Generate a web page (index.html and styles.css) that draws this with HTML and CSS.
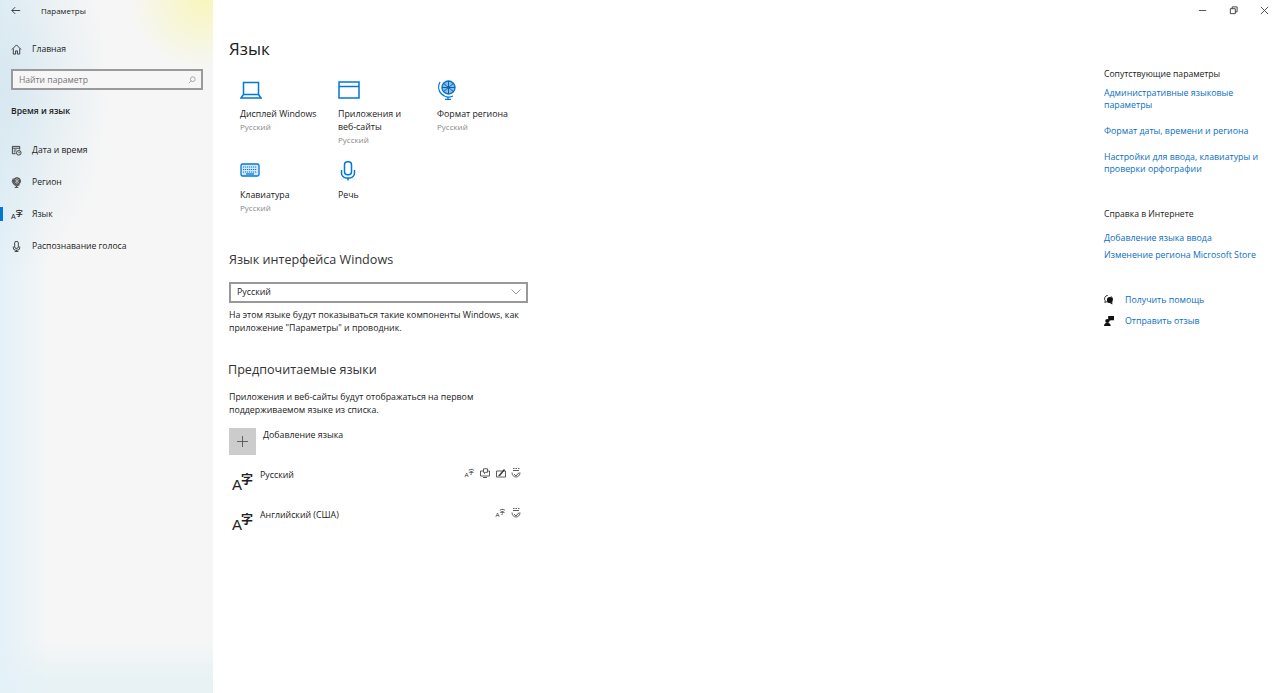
FILE: index.html
```html
<!DOCTYPE html>
<html lang="ru">
<head>
    <meta charset="UTF-8">
    <title>Параметры</title>
    <link rel="stylesheet" href="styles.css">
</head>
<body>
    <div class="window">
        <div class="sidebar">
            <div class="app-title">
                <svg class="back-icon" viewBox="0 0 12 10"><path d="M11 5H1M5 1L1 5l4 4" fill="none" stroke="#222" stroke-width="1"/></svg>
                <span>Параметры</span>
            </div>
            <div class="nav-item home-item">
                <svg class="nav-icon" viewBox="0 0 12 12"><path d="M1 6l5-5 5 5M2.500 5v6h2.500V7.500h2V11h2.500V5" fill="none" stroke="#333" stroke-width="1"/></svg>
                <span>Главная</span>
            </div>
            <div class="search-box">
                <span>Найти параметр</span>
                <svg class="search-icon" viewBox="0 0 10 10"><circle cx="6" cy="4" r="3" fill="none" stroke="#999"/><path d="M4 6L1 9" stroke="#999"/></svg>
            </div>
            <div class="group-title">Время и язык</div>
            <div class="nav-list">
                <div class="nav-item">
                    <svg class="nav-icon" viewBox="0 0 12 12"><path d="M5 9.500H1.500v-8h8V5M1.500 3.500h8M3 5.500h3M3 7.500h2" fill="none" stroke="#333"/><circle cx="8.500" cy="8.500" r="2.500" fill="none" stroke="#333"/><path d="M8.500 7v1.500H10" fill="none" stroke="#333" stroke-width=".7"/></svg>
                    <span>Дата и время</span>
                </div>
                <div class="nav-item">
                    <svg class="nav-icon" viewBox="0 0 12 12"><path d="M2.500 1.500a5 5 0 0 0 7 7" fill="none" stroke="#333"/><circle cx="6.500" cy="4.500" r="3.800" fill="#666" stroke="#333"/><path d="M3.800 2l5.400 5M9.200 2L3.800 7M6.500 .8v7.400" stroke="#ddd" stroke-width=".6"/><path d="M6 9.500V11M4 11.300h4" stroke="#333"/></svg>
                    <span>Регион</span>
                </div>
                <div class="nav-item active">
                    <span class="lang-glyph small"><b>A</b><i>字</i></span>
                    <span>Язык</span>
                </div>
                <div class="nav-item">
                    <svg class="nav-icon" viewBox="0 0 12 12"><rect x="4" y=".5" width="4" height="7.500" rx="1.500" fill="none" stroke="#333"/><path d="M2.500 6v1.500a2.500 2.500 0 0 0 2.500 2.500h2a2.500 2.500 0 0 0 2.500-2.500V6M6 10v1.500M4 11.500h4" fill="none" stroke="#333"/></svg>
                    <span>Распознавание голоса</span>
                </div>
            </div>
        </div>

        <div class="main">
            <h1>Язык</h1>
            <div class="tiles">
                <div class="tile">
                    <svg class="tile-icon" viewBox="0 0 22 20"><path d="M3.500 2.500h15v12h-15zM3.500 14.500L1 18h20l-2.500-3.500" fill="none" stroke="#0078d7" stroke-width="1.500"/></svg>
                    <div class="tile-name">Дисплей Windows</div>
                    <div class="tile-sub">Русский</div>
                </div>
                <div class="tile">
                    <svg class="tile-icon" viewBox="0 0 22 20"><path d="M1 2h20v16H1zM1 6.500h20" fill="none" stroke="#0078d7" stroke-width="1.500"/></svg>
                    <div class="tile-name">Приложения и<br>веб-сайты</div>
                    <div class="tile-sub">Русский</div>
                </div>
                <div class="tile">
                    <svg class="tile-icon" viewBox="0 0 22 20"><circle cx="11.500" cy="7.500" r="6.500" fill="#8cbfe8" stroke="#0078d7" stroke-width="1.400"/><path d="M6 3l11 9M17 3L6 12M11.500 1v13M5 7.500h13" stroke="#0a62ad" stroke-width="1"/><path d="M3 2a10 10 0 0 0 13 14M11 16.500v2.500M8 19.300h6" fill="none" stroke="#0078d7" stroke-width="1.300"/></svg>
                    <div class="tile-name">Формат региона</div>
                    <div class="tile-sub">Русский</div>
                </div>
                <div class="tile">
                    <svg class="tile-icon" viewBox="0 0 22 20"><rect x="1" y="3" width="18" height="12" rx="1.500" fill="#d5e8f8" stroke="#0078d7" stroke-width="1.300"/><path d="M3 6h14M3 8.500h14M3 11h14" stroke="#0078d7" stroke-width="1.200" stroke-dasharray="1.200 .8"/><path d="M6 13h8" stroke="#0078d7" stroke-width="1.300"/></svg>
                    <div class="tile-name">Клавиатура</div>
                    <div class="tile-sub">Русский</div>
                </div>
                <div class="tile">
                    <svg class="tile-icon" viewBox="0 0 22 20"><rect x="6.500" y=".8" width="7" height="13" rx="3" fill="none" stroke="#0078d7" stroke-width="1.500"/><path d="M3.500 9v3a5 5 0 0 0 5 5h3a5 5 0 0 0 5-5V9M10 17v2.500" fill="none" stroke="#0078d7" stroke-width="1.500"/></svg>
                    <div class="tile-name">Речь</div>
                </div>
            </div>

            <h2 class="ui-lang-title">Язык интерфейса Windows</h2>
            <div class="select-box">
                <span>Русский</span>
                <svg class="chevron" viewBox="0 0 10 6"><path d="M.5 .5L5 5 9.500 .5" fill="none" stroke="#999"/></svg>
            </div>
            <p class="note">На этом языке будут показываться такие компоненты Windows, как<br>приложение "Параметры" и проводник.</p>

            <h2 class="pref-title">Предпочитаемые языки</h2>
            <p class="note">Приложения и веб-сайты будут отображаться на первом<br>поддерживаемом языке из списка.</p>
            <div class="add-row">
                <div class="add-button"><svg viewBox="0 0 12 12"><path d="M6 0v12M0 6h12" stroke="#555"/></svg></div>
                <span>Добавление языка</span>
            </div>
            <div class="lang-row">
                <span class="lang-glyph"><b>A</b><i>字</i></span>
                <span class="lang-name">Русский</span>
                <div class="feature-icons">
                    <span class="lang-glyph tiny"><b>A</b><i>字</i></span>
                    <svg viewBox="0 0 10 10"><path d="M3 3H.5v5h9V3H8M3 9.500h4" fill="none" stroke="#333" stroke-width=".8"/><path d="M3.500 .8h4v3.500H5.500L4.500 5.500V4.300h-1z" fill="none" stroke="#333" stroke-width=".8"/></svg>
                    <svg viewBox="0 0 10 10"><path d="M.5 3h9v6h-9z" fill="none" stroke="#333" stroke-width=".8"/><path d="M2 8l6-7 1 1-5 6z" fill="#333"/></svg>
                    <svg viewBox="0 0 10 10"><path d="M2 .5h1.500M4.500 .5H6M7 .5h1.500M2 2.500h6" fill="none" stroke="#333" stroke-width=".8"/><path d="M1 4.500c0 6 8 6 8 0M3 6l2 2 3-3.500" fill="none" stroke="#333" stroke-width=".8"/></svg>
                </div>
            </div>
            <div class="lang-row">
                <span class="lang-glyph"><b>A</b><i>字</i></span>
                <span class="lang-name">Английский (США)</span>
                <div class="feature-icons">
                    <span class="lang-glyph tiny"><b>A</b><i>字</i></span>
                    <svg viewBox="0 0 10 10"><path d="M2 .5h1.500M4.500 .5H6M7 .5h1.500M2 2.500h6" fill="none" stroke="#333" stroke-width=".8"/><path d="M1 4.500c0 6 8 6 8 0M3 6l2 2 3-3.500" fill="none" stroke="#333" stroke-width=".8"/></svg>
                </div>
            </div>
        </div>

        <div class="aside">
            <div class="window-controls">
                <svg viewBox="0 0 10 10"><path d="M1 5h8" stroke="#444"/></svg>
                <svg viewBox="0 0 10 10"><path d="M1.500 3h5.500v5.500H1.500zM3.500 3V1h5.500v5.500H7" fill="none" stroke="#333"/></svg>
                <svg viewBox="0 0 10 10"><path d="M1 1l8 8M9 1l-8 8" stroke="#444"/></svg>
            </div>
            <div class="aside-title">Сопутствующие параметры</div>
            <a class="link">Административные языковые<br>параметры</a>
            <a class="link">Формат даты, времени и региона</a>
            <a class="link">Настройки для ввода, клавиатуры и<br>проверки орфографии</a>
            <div class="aside-title web-title">Справка в Интернете</div>
            <a class="link tight">Добавление языка ввода</a>
            <a class="link tight">Изменение региона Microsoft Store</a>
            <div class="help-links">
                <div class="help-row">
                    <svg viewBox="0 0 12 12"><path d="M4.500 .5a4 4 0 0 0-3 6.500L1 9l2.500-1a4 4 0 0 0 5-6.500" fill="none" stroke="#111"/><circle cx="7" cy="6" r="3.500" fill="#111"/><path d="M7 9.500l3 2v-3" fill="#111"/></svg>
                    <a class="link">Получить помощь</a>
                </div>
                <div class="help-row">
                    <svg viewBox="0 0 12 12"><circle cx="4" cy="6" r="2.500" fill="#111"/><path d="M0 12c0-3 2-3.500 4-3.500S8 9 8 12z" fill="#111"/><path d="M5 0h7v5H8L6.500 6.500V5H5z" fill="#111"/></svg>
                    <a class="link">Отправить отзыв</a>
                </div>
            </div>
        </div>
    </div>
</body>
</html>
```

FILE: styles.css
```css
html, body {
    height: 100%;
}
body {
    margin: 0;
    font-family: "Open Sans", "Noto Sans", sans-serif;
    font-size: 8.800px;
    color: #222;
    background-color: #ffffff;
}
.window {
    display: flex;
    height: 100%;
}

/* left column */
.sidebar {
    width: 213px;
    flex-shrink: 0;
    box-sizing: border-box;
    padding-left: 11px;
    font-size: 8.600px;
    background:
        radial-gradient(ellipse 75px 70px at 205px 0px, #f8f6bc 0%, rgba(248,246,188,0) 100%),
        radial-gradient(ellipse 110px 190px at 0px 90px, #d8e8f0 0%, rgba(216,232,240,0) 100%),
        linear-gradient(90deg, #e4f1f8 0%, rgba(228,241,248,0) 50px),
        linear-gradient(180deg, rgba(232,242,245,0) 640px, #e8f2f5 680px),
        #f6f6f6;
}
.app-title {
    display: flex;
    align-items: center;
    height: 21px;
    font-size: 8px;
}
.back-icon {
    width: 10px;
    height: 9px;
    margin-right: 20px;
}
.nav-item {
    display: flex;
    align-items: center;
    height: 32px;
    position: relative;
}
.nav-icon {
    width: 11px;
    height: 11px;
    margin-right: 10px;
}
.home-item {
    margin-top: 12px;
}
.search-box {
    display: flex;
    align-items: center;
    justify-content: space-between;
    width: 192px;
    height: 21px;
    box-sizing: border-box;
    margin-top: 4px;
    padding: 0 5px 0 6px;
    border: 2px solid #9a9a9a;
    background-color: #f6f6f6;
    color: #777;
}
.search-icon {
    width: 8px;
    height: 8px;
}
.group-title {
    margin-top: 15px;
    font-weight: 600;
}
.nav-list {
    margin-top: 17px;
}
.active::before {
    content: "";
    position: absolute;
    left: -11px;
    top: 9px;
    width: 3px;
    height: 14px;
    background-color: #0078d7;
}

/* language glyph: latin A with a kanji raised beside it */
.lang-glyph {
    display: inline-flex;
    align-items: flex-end;
    width: 22px;
    height: 24px;
    line-height: 1;
}
.lang-glyph b {
    font-family: "Liberation Sans", sans-serif;
    font-weight: normal;
    font-size: 15px;
}
.lang-glyph i {
    font-family: "Noto Sans CJK SC", sans-serif;
    font-style: normal;
    font-weight: 700;
    font-size: 12px;
    margin: 0 0 7px -1px;
}
.lang-glyph.small {
    width: 11px;
    height: 12px;
    margin-right: 10px;
}
.lang-glyph.small b {
    font-size: 7px;
}
.lang-glyph.small i {
    font-size: 7px;
    margin: 0 0 3px 0;
}
.lang-glyph.tiny {
    width: 10px;
    height: 10px;
}
.lang-glyph.tiny b {
    font-size: 6px;
}
.lang-glyph.tiny i {
    font-size: 5.500px;
    font-weight: 400;
    margin: 0 0 3px 0;
}

/* center column */
.main {
    width: 300px;
    flex-shrink: 0;
    margin-left: 16px;
}
h1 {
    margin: 37px 0 0;
    font-size: 17px;
    font-weight: 400;
    line-height: 23px;
}
h2 {
    margin: 0;
    font-size: 12.600px;
    font-weight: 400;
    line-height: 18px;
    color: #333;
}
.tiles {
    display: grid;
    grid-template-columns: 98px 99px 98px;
    grid-template-rows: 81px 70px;
    margin: 20px 0 0 11px;
}
.tile-icon {
    display: block;
    width: 22px;
    height: 20px;
    margin-bottom: 8px;
}
.tile-name {
    line-height: 13px;
}
.tile-sub {
    line-height: 12px;
    font-size: 8px;
    color: #888;
}
.ui-lang-title {
    margin-top: 20px;
}
.select-box {
    display: flex;
    align-items: center;
    justify-content: space-between;
    width: 299px;
    height: 21px;
    box-sizing: border-box;
    margin: 13px 0 6px 0;
    padding: 0 5px 1px 6px;
    border: 2px solid #999;
}
.chevron {
    width: 10px;
    height: 6px;
}
.note {
    margin: 0;
    line-height: 13px;
}
.pref-title {
    margin: 26px 0 12px -1px;
}
.add-row {
    display: flex;
    align-items: flex-start;
    margin: 11px 0 13px;
}
.add-row span {
    margin: 1px 0 0 7px;
}
.add-button {
    display: flex;
    align-items: center;
    justify-content: center;
    width: 27px;
    height: 27px;
    background-color: #cccccc;
}
.add-button svg {
    width: 11px;
    height: 11px;
}
.lang-row {
    display: flex;
    align-items: flex-start;
    width: 289px;
    height: 40px;
    margin-left: 3px;
}
.lang-name {
    margin: 1px 0 0 6px;
}
.feature-icons {
    display: flex;
    gap: 5.500px;
    margin-left: auto;
}
.feature-icons svg {
    width: 10px;
    height: 10px;
}

/* right column */
.aside {
    flex: 1;
    position: relative;
    padding: 68px 0 0 575px;
}
.window-controls {
    position: absolute;
    top: 6px;
    right: 11px;
    display: flex;
    gap: 22px;
}
.window-controls svg {
    width: 9px;
    height: 9px;
}
.aside-title {
    font-size: 8.600px;
    line-height: 13px;
    margin-bottom: 6px;
}
.web-title {
    margin-top: 33px;
    margin-bottom: 11px;
}
.link {
    display: block;
    line-height: 12px;
    color: #0a6fc2;
    margin-bottom: 14px;
}
.link.tight {
    margin-bottom: 5px;
}
.help-links {
    margin-top: 28px;
}
.help-row {
    display: flex;
    align-items: center;
    height: 21px;
}
.help-row svg {
    width: 10px;
    height: 10px;
    margin-right: 11px;
}
.help-row .link {
    margin: 0;
}
```
